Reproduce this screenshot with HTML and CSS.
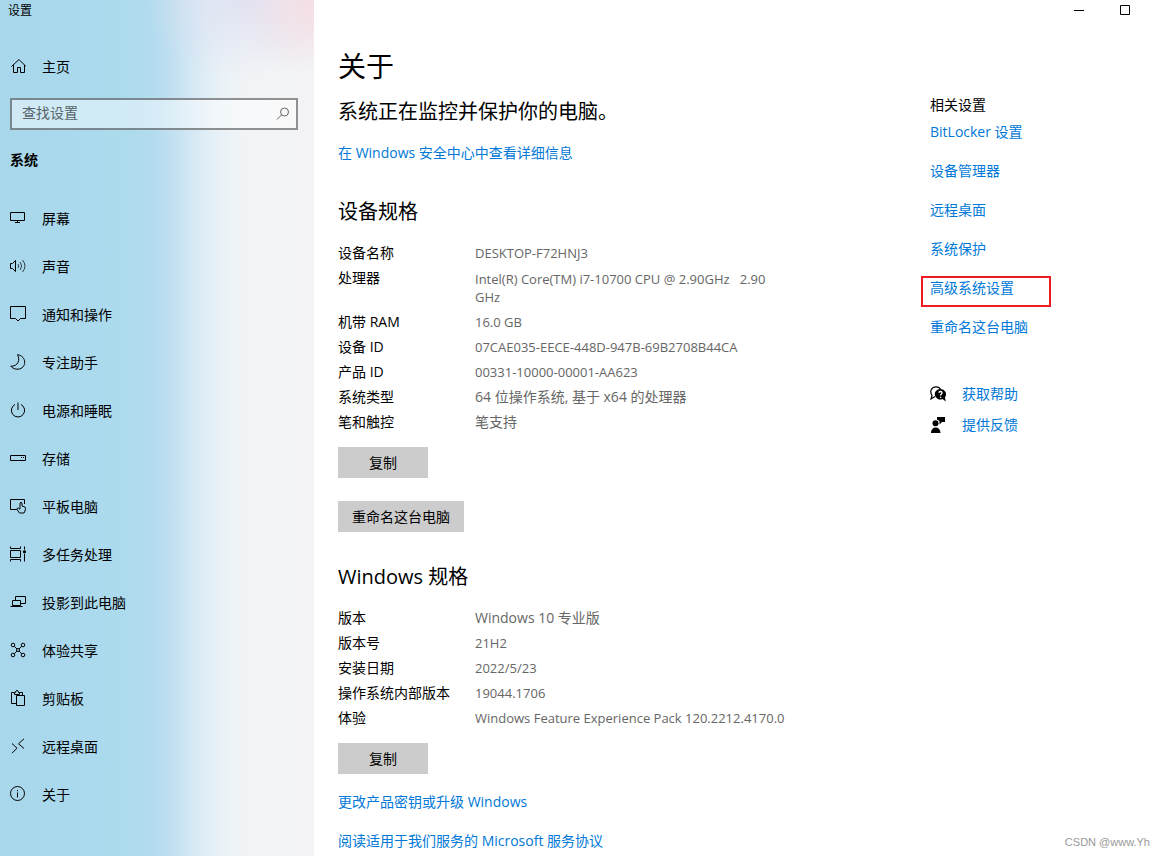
FILE: index.html
```
<!DOCTYPE html>
<html lang="zh-CN">
<head>
<meta charset="utf-8">
<meta name="viewport" content="width=device-width, initial-scale=1">
<title>设置</title>
<link rel="stylesheet" href="styles.css">
</head>
<body>
<div class="window">
  <nav class="sidebar">
    <div class="app-title">设置</div>
    <a class="nav-item home" href="#">
      <svg class="icon" viewBox="0 0 16 16"><path d="M1.500 8.500 9 1.500 16 8.500M3.500 7V14.500H7.500V9.500H10.500V14.500H14.500V7"/></svg>
      <span>主页</span>
    </a>
    <label class="search">
      <input type="text" placeholder="查找设置" aria-label="查找设置">
      <svg class="icon" viewBox="0 0 16 16"><circle cx="9.500" cy="6" r="4"/><path d="M6.700 8.800 2 13.500"/></svg>
    </label>
    <h2 class="nav-heading">系统</h2>
    <div class="nav-list">
      <a class="nav-item" href="#"><svg class="icon" viewBox="0 0 16 16"><path d="M.5 2.500H14.500V10.500H.5ZM7.500 10.500V12.500M5 12.500H10"/></svg><span>屏幕</span></a>
      <a class="nav-item" href="#"><svg class="icon" viewBox="0 0 16 16"><path d="M.5 5.500H2.500L5.500 2.500V13.500L2.500 10.500H.5Z"/><path d="M8 6Q9.500 8 8 10M10.200 4Q13 8 10.200 12M12.500 2Q17.500 8 12.500 14" class="soft"/></svg><span>声音</span></a>
      <a class="nav-item" href="#"><svg class="icon" viewBox="0 0 16 16"><path d="M.5 .5H15.500V12.500H10.500L8 15 5.500 12.500H.5Z"/></svg><span>通知和操作</span></a>
      <a class="nav-item" href="#"><svg class="icon" viewBox="0 0 16 16"><path d="M7.500 .7C17 2 17 14.500 8 15.200 5 15.400 2 14 .8 12.200 8 12.500 10.500 6 7.500 .7Z"/></svg><span>专注助手</span></a>
      <a class="nav-item" href="#"><svg class="icon" viewBox="0 0 16 16"><path d="M5 2.500A6.600 6.600 0 1 0 11 2.500M8 .5V8"/></svg><span>电源和睡眠</span></a>
      <a class="nav-item" href="#"><svg class="icon" viewBox="0 0 16 16"><path d="M.5 5.500H15.500V10.500H.5ZM11 7.500H12M13 7.500H14"/></svg><span>存储</span></a>
      <a class="nav-item" href="#"><svg class="icon" viewBox="0 0 16 16"><path d="M7 11.500H.5V1.500H14.500V6"/><path d="M10 11V5Q11 3.500 12 5V8L15 9Q16 10 15 13L14 15H9.500L7 11.500Q7 9.500 8.500 10.200L10 11.500"/></svg><span>平板电脑</span></a>
      <a class="nav-item" href="#"><svg class="icon" viewBox="0 0 16 16"><path d="M.5 .5V2.500H10.500V.5M.5 4.500H10.500V11.500H.5ZM.5 15.500V13.500H10.500V15.500M14.500 .5V3.500M14.500 8V15.500"/><circle cx="14.500" cy="5.800" r="1.200" fill="currentColor"/></svg><span>多任务处理</span></a>
      <a class="nav-item" href="#"><svg class="icon" viewBox="0 0 16 16"><path d="M5.500 6V2.500H15.500V9.500H10.500M2.500 6.500H10.500V11.500H2.500ZM.5 12.500H12.500"/></svg><span>投影到此电脑</span></a>
      <a class="nav-item" href="#"><svg class="icon" viewBox="0 0 16 16"><circle cx="3" cy="3" r="1.800"/><circle cx="13" cy="3" r="1.800"/><circle cx="3" cy="13" r="1.800"/><circle cx="13" cy="13" r="1.800"/><circle cx="8" cy="8" r="1.500"/><path d="M4.300 4.300 7 7M9 7 11.700 4.300M7 9 4.300 11.700M9 9 11.700 11.700"/></svg><span>体验共享</span></a>
      <a class="nav-item" href="#"><svg class="icon" viewBox="0 0 16 16"><path d="M6.500 13.500H1.500V2.500H4.500M9.500 2.500H12.500V5.500M4.500 4.500V2.500H5.500Q5.500 .5 7 .5 8.500 .5 8.500 2.500H9.500V4.500ZM6.500 5.500H14.500V15.500H6.500Z"/></svg><span>剪贴板</span></a>
      <a class="nav-item" href="#"><svg class="icon" viewBox="0 0 16 16"><path d="M2 5.500 7 10.200 2 15.200M14 .8 8.500 5.800 14 10.500"/></svg><span>远程桌面</span></a>
      <a class="nav-item" href="#"><svg class="icon" viewBox="0 0 16 16"><circle cx="7.500" cy="7.500" r="7"/><path d="M7.500 6.500V11.500M7.500 4V5.200"/></svg><span>关于</span></a>
    </div>
  </nav>

  <div class="pane">
    <div class="window-controls">
      <button type="button" aria-label="最小化"><svg viewBox="0 0 10 10"><path d="M0 5.500H10"/></svg></button>
      <button type="button" aria-label="最大化"><svg viewBox="0 0 10 10"><path d="M.5 .5H9.500V9.500H.5Z"/></svg></button>
    </div>
    <div class="columns">
      <main class="content">
        <h1>关于</h1>
        <p class="status">系统正在监控并保护你的电脑。</p>
        <a class="link" href="#">在 Windows 安全中心中查看详细信息</a>

        <h2>设备规格</h2>
        <dl class="specs">
          <dt>设备名称</dt><dd class="latin">DESKTOP-F72HNJ3</dd>
          <dt>处理器</dt><dd class="latin multiline">Intel(R) Core(TM) i7-10700 CPU @ 2.90GHz &nbsp; 2.90 GHz</dd>
          <dt>机带 RAM</dt><dd class="latin">16.0 GB</dd>
          <dt>设备 ID</dt><dd class="latin">07CAE035-EECE-448D-947B-69B2708B44CA</dd>
          <dt>产品 ID</dt><dd class="latin">00331-10000-00001-AA623</dd>
          <dt>系统类型</dt><dd>64 位操作系统, 基于 x64 的处理器</dd>
          <dt>笔和触控</dt><dd>笔支持</dd>
        </dl>
        <div class="actions">
          <button class="button" type="button">复制</button>
          <button class="button" type="button">重命名这台电脑</button>
        </div>

        <h2>Windows 规格</h2>
        <dl class="specs">
          <dt>版本</dt><dd>Windows 10 专业版</dd>
          <dt>版本号</dt><dd class="latin">21H2</dd>
          <dt>安装日期</dt><dd class="latin">2022/5/23</dd>
          <dt>操作系统内部版本</dt><dd class="latin">19044.1706</dd>
          <dt>体验</dt><dd class="latin">Windows Feature Experience Pack 120.2212.4170.0</dd>
        </dl>
        <div class="actions">
          <button class="button" type="button">复制</button>
        </div>
        <div class="footer-links">
          <a class="link" href="#">更改产品密钥或升级 Windows</a>
          <a class="link" href="#">阅读适用于我们服务的 Microsoft 服务协议</a>
        </div>
      </main>

      <aside class="related">
        <h3>相关设置</h3>
        <div class="related-links">
          <a class="link" href="#">BitLocker 设置</a>
          <a class="link" href="#">设备管理器</a>
          <a class="link" href="#">远程桌面</a>
          <a class="link" href="#">系统保护</a>
          <a class="link marked" href="#">高级系统设置</a>
          <a class="link" href="#">重命名这台电脑</a>
        </div>
        <div class="support">
          <a class="link" href="#">
            <svg class="solid" viewBox="0 0 16 16"><path d="M5 10.500 1 13 2 9.500C-1 5 2 .8 6 .8 8.500 .8 10 2 10.500 3.500" fill="none" stroke="#000" stroke-width="1.200"/><path d="M10.500 3A5.300 5.300 0 1 0 12.500 13L15.800 15.500 14.900 11.500A5.300 5.300 0 0 0 10.500 3Z"/><path d="M8.800 6.700Q9.200 5.400 10.600 5.500 12.200 5.700 12 7 11.800 7.800 10.600 8.800V9.600M10.600 10.800V12" fill="none" stroke="#fff" stroke-width="1.300"/></svg>
            <span>获取帮助</span>
          </a>
          <a class="link" href="#">
            <svg class="solid" viewBox="0 0 16 16"><circle cx="5.500" cy="6.200" r="3"/><path d="M1 16C1 8.500 10.500 8.500 10.500 16ZM7 0H15V5H12L9.500 7.500V4L7 2.500Z"/></svg>
            <span>提供反馈</span>
          </a>
        </div>
      </aside>
    </div>
    <div class="watermark">CSDN @www.Yh</div>
  </div>
</div>
</body>
</html>
```
FILE: styles.css
```
*, *::after { box-sizing: border-box; }

body {
  margin: 0;
  background: #fff;
  color: #000;
  font: 14px/18px "Open Sans", "Noto Sans CJK SC", sans-serif;
}

h1, h2, h3, p, dl, dd { margin: 0; font-weight: 400; }
a { text-decoration: none; color: inherit; }

.window {
  display: grid;
  grid-template-columns: 314px 1fr;
  min-height: 100vh;
}

/* Sidebar */
.sidebar {
  padding: 2px 16px 0 10px;
  background:
    radial-gradient(circle at 314px 0, rgba(246, 220, 226, 0.9), rgba(246, 228, 232, 0) 75px),
    radial-gradient(ellipse 100px 80px at 245px 0, rgba(220, 222, 241, 0.8), rgba(228, 232, 245, 0)),
    linear-gradient(90deg, #a8d7ec 0, #acdbee 120px, #b2dbef 150px, #bfdff0 170px, #d2e7f4 190px, #e1eef6 207px, #eaf2f7 222px, #f1f4f6 245px, #f3f3f5 100%);
}

.app-title {
  margin-left: -2px;
  font-size: 12px;
}

.nav-item {
  display: flex;
  align-items: center;
  gap: 16px;
  height: 48px;
}

.nav-item span { padding-top: 2px; }

.home { margin-top: 22px; }

.icon {
  flex: none;
  width: 16px;
  height: 16px;
  fill: none;
  stroke: currentColor;
}

.soft { opacity: 0.7; }

.search {
  display: flex;
  align-items: center;
  height: 32px;
  margin-top: 8px;
  padding: 0 5px 0 10px;
  border: 2px solid rgba(0, 0, 0, 0.42);
  background: rgba(255, 255, 255, 0.45);
  color: #666;
}

.search input {
  flex: 1;
  min-width: 0;
  padding: 0 0 2px;
  border: 0;
  outline: 0;
  background: none;
  font: inherit;
}

.search input::placeholder { color: #566368; opacity: 1; }

.nav-heading {
  margin-top: 21px;
  font-size: 14px;
  font-weight: 700;
}

.nav-list { margin-top: 25px; }

/* Content pane */
.pane { position: relative; }

.window-controls {
  display: flex;
  justify-content: flex-end;
  padding-right: 17px;
}

.window-controls button {
  display: grid;
  place-items: center;
  width: 46px;
  height: 20px;
  padding: 0;
  border: 0;
  background: none;
}

.window-controls svg {
  width: 10px;
  height: 10px;
  fill: none;
  stroke: #000;
}

.columns {
  display: grid;
  grid-template-columns: 1fr 235px;
  padding-left: 24px;
}

.content { padding-top: 28px; }

h1 { font-size: 28px; line-height: 36px; }

.status {
  margin: 15px 0 19px;
  font-size: 20px;
  line-height: 26px;
}

.link {
  display: block;
  color: #0078d7;
}

.content h2 {
  margin-top: 37px;
  font-size: 20px;
  line-height: 26px;
}

.specs {
  display: grid;
  grid-template-columns: 137px 1fr;
  row-gap: 7px;
  max-width: 450px;
  margin-top: 19px;
}

.specs dd { color: #666; }
.specs .latin { font-size: 13px; }
.specs .multiline { padding-top: 1px; }

.actions {
  display: flex;
  flex-direction: column;
  align-items: flex-start;
  gap: 23px;
  margin-top: 16px;
}

.content .actions + h2 { margin-top: 32px; }

.button {
  min-width: 90px;
  height: 31px;
  padding: 0 14px;
  border: 0;
  background: #ccc;
  color: #000;
  font: inherit;
}

.footer-links {
  display: grid;
  gap: 21px;
  margin-top: 19px;
}

/* Related settings */
.related { padding-top: 76px; }

.related h3 { font-size: 14px; }

.related-links {
  display: grid;
  justify-items: start;
  gap: 21px;
  margin-top: 9px;
}

.marked { position: relative; }

.marked::after {
  content: "";
  position: absolute;
  top: -3px;
  left: -9px;
  width: 130px;
  height: 31px;
  border: 2px solid #ed1c24;
}

.support {
  display: grid;
  gap: 13px;
  margin-top: 49px;
}

.support .link {
  display: flex;
  align-items: center;
  gap: 16px;
}

.solid {
  width: 16px;
  height: 16px;
  fill: #000;
}

/* Overlays the lower right corner of the pane */
.watermark {
  position: absolute;
  right: 15px;
  bottom: 5px;
  color: #999;
  font: 11px/18px "Liberation Sans", sans-serif;
}
```
